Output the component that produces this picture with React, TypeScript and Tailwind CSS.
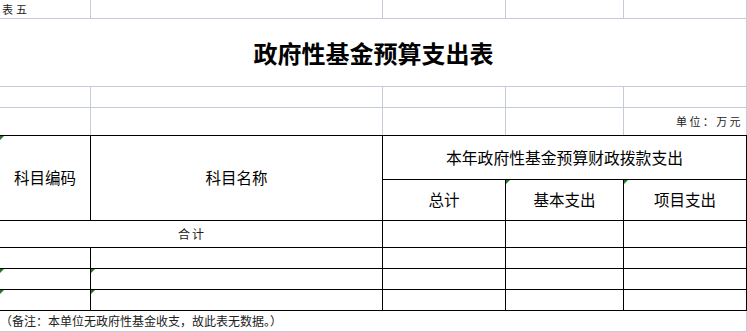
import React from "react";

const G = "border-[#c5cbd9]";
const FONT = { fontFamily: '"Noto Sans CJK SC", "Noto Sans", sans-serif' };

function Tri() {
  return (
    <span className="absolute left-0 top-0 h-0 w-0 border-t-[4px] border-r-[4px] border-t-[#1d7a1d] border-r-transparent" />
  );
}

function GrayRow({ h, children }: { h: string; children?: React.ReactNode }) {
  return (
    <div className={`flex ${h}`}>
      <div className={`w-[91px] shrink-0 border-r border-b ${G}`} />
      <div className={`w-[292px] shrink-0 border-r border-b ${G}`} />
      <div className={`w-[123px] shrink-0 border-r border-b ${G}`} />
      <div className={`w-[118px] shrink-0 border-r border-b ${G}`} />
      <div className={`w-[123px] shrink-0 border-r border-b ${G} flex items-center justify-end pr-[3px]`}>{children}</div>
    </div>
  );
}

function DataRow({ h, tri }: { h: string; tri?: boolean }) {
  return (
    <div className={`flex ${h}`}>
      <div className="relative w-[91px] shrink-0 border-r border-b border-black">{tri && <Tri />}</div>
      <div className="relative w-[292px] shrink-0 border-r border-b border-black">{tri && <Tri />}</div>
      <div className="w-[123px] shrink-0 border-r border-b border-black" />
      <div className="w-[118px] shrink-0 border-r border-b border-black" />
      <div className="w-[123px] shrink-0 border-r border-b border-black" />
    </div>
  );
}

export default function App() {
  return (
    <div className="w-[747px] h-[332px] bg-white overflow-hidden text-black" style={FONT}>
      {/* Row A */}
      <div className="flex h-[19px]">
        <div className={`relative w-[91px] shrink-0 border-r border-b ${G} flex items-center pl-[2px] text-[11px] tracking-[3px] leading-none text-[#1a1a1a]`}>
          表五
        </div>
        <div className={`w-[292px] shrink-0 border-r border-b ${G}`} />
        <div className={`w-[123px] shrink-0 border-r border-b ${G}`} />
        <div className={`w-[118px] shrink-0 border-r border-b ${G}`} />
        <div className={`w-[123px] shrink-0 border-r border-b ${G}`} />
      </div>
      {/* Title */}
      <div className={`h-[68px] border-r border-b ${G} flex items-center justify-center`}>
        <span className="text-[24px] font-bold leading-none tracking-[0px] pl-[1px]">政府性基金预算支出表</span>
      </div>
      <GrayRow h="h-[21px]" />
      {/* Row D */}
      <div className="flex h-[27px]">
        <div className={`w-[91px] shrink-0 border-r ${G}`} />
        <div className={`w-[292px] shrink-0 border-r ${G}`} />
        <div className={`w-[123px] shrink-0 border-r ${G}`} />
        <div className={`w-[118px] shrink-0 border-r ${G}`} />
        <div className={`w-[123px] shrink-0 border-r ${G} flex items-center justify-end pr-[3px] text-[11px] tracking-[2.4px] leading-none text-[#222]`}>
          单位：万元
        </div>
      </div>
      {/* Table */}
      <div className="border-t border-black">
        <div className="flex h-[85px]">
          <div className="relative w-[91px] shrink-0 border-r border-b border-black flex items-center justify-center text-[15.5px] leading-none">
            <Tri />
            科目编码
          </div>
          <div className="w-[292px] shrink-0 border-r border-b border-black flex items-center justify-center text-[15.5px] leading-none">
            科目名称
          </div>
          <div className="w-[364px] shrink-0 flex flex-col">
            <div className="h-[44px] border-r border-b border-black flex items-center justify-center text-[15.8px] leading-none">
              本年政府性基金预算财政拨款支出
            </div>
            <div className="flex h-[41px]">
              <div className="w-[123px] shrink-0 border-r border-b border-black flex items-center justify-center text-[15.5px] leading-none">
                总计
              </div>
              <div className="relative w-[118px] shrink-0 border-r border-b border-black flex items-center justify-center text-[15.5px] leading-none">
                <Tri />
                基本支出
              </div>
              <div className="relative w-[123px] shrink-0 border-r border-b border-black flex items-center justify-center text-[15.5px] leading-none">
                <Tri />
                项目支出
              </div>
            </div>
          </div>
        </div>
        {/* 合计 */}
        <div className="flex h-[27px]">
          <div className="w-[383px] shrink-0 border-r border-b border-black flex items-center justify-center text-[12px] tracking-[2px] leading-none text-[#222] pl-[2px]">
            合计
          </div>
          <div className="w-[123px] shrink-0 border-r border-b border-black" />
          <div className="w-[118px] shrink-0 border-r border-b border-black" />
          <div className="w-[123px] shrink-0 border-r border-b border-black" />
        </div>
        <DataRow h="h-[21px]" />
        <DataRow h="h-[21px]" tri />
        <DataRow h="h-[21px]" tri />
      </div>
      {/* Note */}
      <div className={`flex h-[21px] border-b ${G}`}>
        <div className={`w-[747px] border-r ${G} flex items-center pl-[0px] text-[12px] leading-none text-[#222]`}>
          （备注：本单位无政府性基金收支，故此表无数据。）
        </div>
      </div>
    </div>
  );
}
